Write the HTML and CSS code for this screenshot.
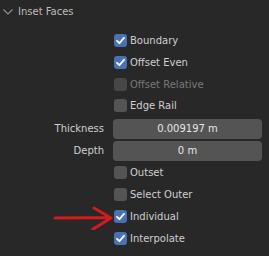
FILE: index.html
```html
<!DOCTYPE html>
<html>
<head>
<meta charset="utf-8">
<link rel="stylesheet" href="styles.css">
</head>
<body>
<div class="panel">
  <div class="header">
    <svg class="chev" width="10" height="6" viewBox="0 0 10 6"><path d="M0.5 0.5 L5 5 L9.5 0.5" fill="none" stroke="#8f8f8f" stroke-width="1.2"/></svg>
    <span>Inset Faces</span>
  </div>
  <div class="rows">
    <div class="row"><span class="cb on"><svg viewBox="0 0 13 13"><path d="M3 6.8 L5.4 9.2 L10 3.8" fill="none" stroke="#fff" stroke-width="1.8" stroke-linecap="round" stroke-linejoin="round"/></svg></span><span class="lbl">Boundary</span></div>
    <div class="row"><span class="cb on"><svg viewBox="0 0 13 13"><path d="M3 6.8 L5.4 9.2 L10 3.8" fill="none" stroke="#fff" stroke-width="1.8" stroke-linecap="round" stroke-linejoin="round"/></svg></span><span class="lbl">Offset Even</span></div>
    <div class="row dis"><span class="cb"></span><span class="lbl">Offset Relative</span></div>
    <div class="row"><span class="cb"></span><span class="lbl">Edge Rail</span></div>
    <div class="field-row first"><span class="flbl">Thickness</span><div class="field">0.009197 m</div></div>
    <div class="field-row last"><span class="flbl">Depth</span><div class="field">0 m</div></div>
    <div class="row"><span class="cb"></span><span class="lbl">Outset</span></div>
    <div class="row"><span class="cb"></span><span class="lbl">Select Outer</span></div>
    <div class="row marked"><span class="cb on"><svg viewBox="0 0 13 13"><path d="M3 6.8 L5.4 9.2 L10 3.8" fill="none" stroke="#fff" stroke-width="1.8" stroke-linecap="round" stroke-linejoin="round"/></svg></span><span class="lbl">Individual</span>
      <svg class="arrow" width="62" height="24" viewBox="0 0 62 24"><path d="M2 12 L55 11.5 M41 2 C48 6 53 9 58 12 C53 15 47 19 40 23" fill="none" stroke="#d01c1c" stroke-width="3" stroke-linecap="round" stroke-linejoin="round"/></svg>
    </div>
    <div class="row"><span class="cb on"><svg viewBox="0 0 13 13"><path d="M3 6.8 L5.4 9.2 L10 3.8" fill="none" stroke="#fff" stroke-width="1.8" stroke-linecap="round" stroke-linejoin="round"/></svg></span><span class="lbl">Interpolate</span></div>
  </div>
</div>
</body>
</html>
```
FILE: styles.css
```css
html, body {
  margin: 0;
  padding: 0;
  background: #282828;
  width: 269px;
  height: 256px;
  overflow: hidden;
}
.panel {
  font-family: "DejaVu Sans", sans-serif;
  font-size: 10px;
  color: #cfcfcf;
}
.header {
  height: 22px;
  display: flex;
  align-items: center;
  padding-left: 3px;
  color: #bdbdbd;
}
.chev {
  margin-right: 5px;
  margin-top: 1px;
}
.rows {
  padding-top: 8px;
  display: flex;
  flex-direction: column;
}
.row {
  position: relative;
  height: 21.7px;
  display: flex;
  align-items: center;
  padding-left: 114px;
}
.cb {
  width: 13px;
  height: 13px;
  border-radius: 3px;
  background: #545454;
  display: block;
  flex: none;
}
.cb svg {
  display: block;
  width: 13px;
  height: 13px;
}
.cb.on {
  background: #4772b3;
}
.lbl {
  margin-left: 3px;
}
.row.dis .cb {
  background: #474747;
}
.row.dis .lbl {
  color: #787878;
}
.field-row {
  height: 20px;
  display: grid;
  grid-template-columns: 104px 149px;
  column-gap: 9px;
  align-items: center;
  margin-bottom: 2px;
}
.field-row.first {
  margin-top: 2.2px;
}
.field-row.last {
  margin-bottom: 1.2px;
}
.flbl {
  text-align: right;
}
.field {
  height: 20px;
  line-height: 20px;
  background: #545454;
  border-radius: 4px;
  text-align: center;
  color: #e6e6e6;
}
.arrow {
  position: absolute;
  left: 53px;
  top: 0px;
}
```
